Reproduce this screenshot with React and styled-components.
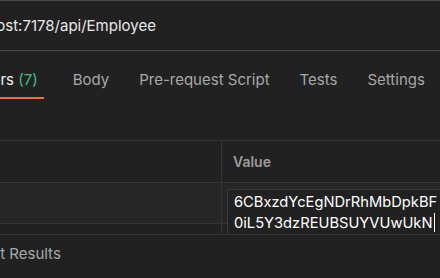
import React from "react";
import styled, { createGlobalStyle } from "styled-components";

const GlobalStyle = createGlobalStyle`
  html, body {
    margin: 0;
    padding: 0;
    background: #212121;
    overflow: hidden;
  }
  body {
    font-family: Inter, "Noto Sans", sans-serif;
  }
`;

const tabs = [
  { label: "Headers", count: 7, active: true },
  { label: "Body" },
  { label: "Pre-request Script" },
  { label: "Tests" },
  { label: "Settings" },
];

const App = () => {
  return (
    <>
      <GlobalStyle />
      <Page>
        <UrlBar>
          <UrlText>localhost:7178/api/Employee</UrlText>
        </UrlBar>

        <TabStrip>
          {tabs.map((t) => (
            <Tab key={t.label} $active={t.active}>
              {t.label}
              {t.count != null && <Count> ({t.count})</Count>}
            </Tab>
          ))}
        </TabStrip>

        <RequestPane>
          <Table>
            <HeadRow>
              <Cell />
              <HeadCell>Value</HeadCell>
            </HeadRow>
            <DataRow>
              <Cell />
              <ValueCell>
                <Editor>
                  <EditorLine>6CBxzdYcEgNDrRhMbDpkBF</EditorLine>
                  <EditorLine>
                    0iL5Y3dzREUBSUYVUwUkN<Caret />
                  </EditorLine>
                </Editor>
              </ValueCell>
            </DataRow>
            <StubRow>
              <Cell />
              <Cell $divider />
            </StubRow>
          </Table>
        </RequestPane>

        <ResponsePane>
          <ResponseTab>Test Results</ResponseTab>
        </ResponsePane>
      </Page>
    </>
  );
};

export default App;

const Page = styled.div`
  width: 440px;
  height: 278px;
  overflow: hidden;
  border-top: 1px solid #4a4a4a;
  box-sizing: border-box;
`;

const UrlBar = styled.div`
  height: 50px;
  display: flex;
  align-items: center;
  padding-top: 1px;
  box-sizing: border-box;
  border-bottom: 1px solid #4b4b4b;
  white-space: nowrap;
`;

const UrlText = styled.span`
  margin-left: -46px;
  font-size: 15px;
  line-height: 18px;
  color: #e8e8e8;
`;

const TabStrip = styled.div`
  display: flex;
  gap: 18px;
  margin-left: -52px;
  white-space: nowrap;
`;

const Tab = styled.div`
  padding: 20px 6px 8px;
  font-size: 15px;
  line-height: 18px;
  color: ${(p) => (p.$active ? "#f2f2f2" : "#a8a8a8")};
  border-bottom: 2px solid ${(p) => (p.$active ? "#ff6c37" : "transparent")};
  margin-right: ${(p) => (p.$active ? "5px" : "0")};
`;

const Count = styled.span`
  color: #45bd7e;
`;

const RequestPane = styled.div`
  height: 135px;
  padding-top: 41px;
  box-sizing: border-box;
  overflow: hidden;
`;

const Table = styled.div`
  border-top: 1px solid #353535;
`;

const Row = styled.div`
  display: grid;
  grid-template-columns: 221px 1fr;
`;

const HeadRow = styled(Row)`
  height: 41px;
  border-bottom: 1px solid #353535;
`;

const DataRow = styled(Row)`
  height: 40px;
  background: #262626;
  border-bottom: 1px solid #353535;
`;

const StubRow = styled(Row)`
  height: 20px;
`;

const Cell = styled.div`
  border-left: ${(p) => (p.$divider ? "1px solid #353535" : "none")};
`;

const HeadCell = styled.div`
  display: flex;
  align-items: center;
  padding-left: 11px;
  border-left: 1px solid #353535;
  font-size: 14px;
  font-weight: 600;
  color: #9c9c9c;
`;

const ValueCell = styled.div`
  position: relative;
  border-left: 1px solid #353535;
`;

const Editor = styled.div`
  position: absolute;
  left: 5px;
  top: 6px;
  width: 260px;
  height: 70px;
  padding: 2px 6px;
  background: #212121;
  border: 1px solid #3a3a3a;
  white-space: nowrap;
`;

const EditorLine = styled.div`
  font-size: 14.7px;
  line-height: 21px;
  color: #ffffff;
`;

const Caret = styled.span`
  display: inline-block;
  width: 1px;
  height: 19px;
  margin-left: 2px;
  vertical-align: -4px;
  background: #ffffff;
`;

const ResponsePane = styled.div`
  border-top: 1px solid #353535;
  padding-top: 10px;
  white-space: nowrap;
`;

const ResponseTab = styled.div`
  margin-left: -25px;
  font-size: 15px;
  line-height: 18px;
  color: #a8a8a8;
`;
